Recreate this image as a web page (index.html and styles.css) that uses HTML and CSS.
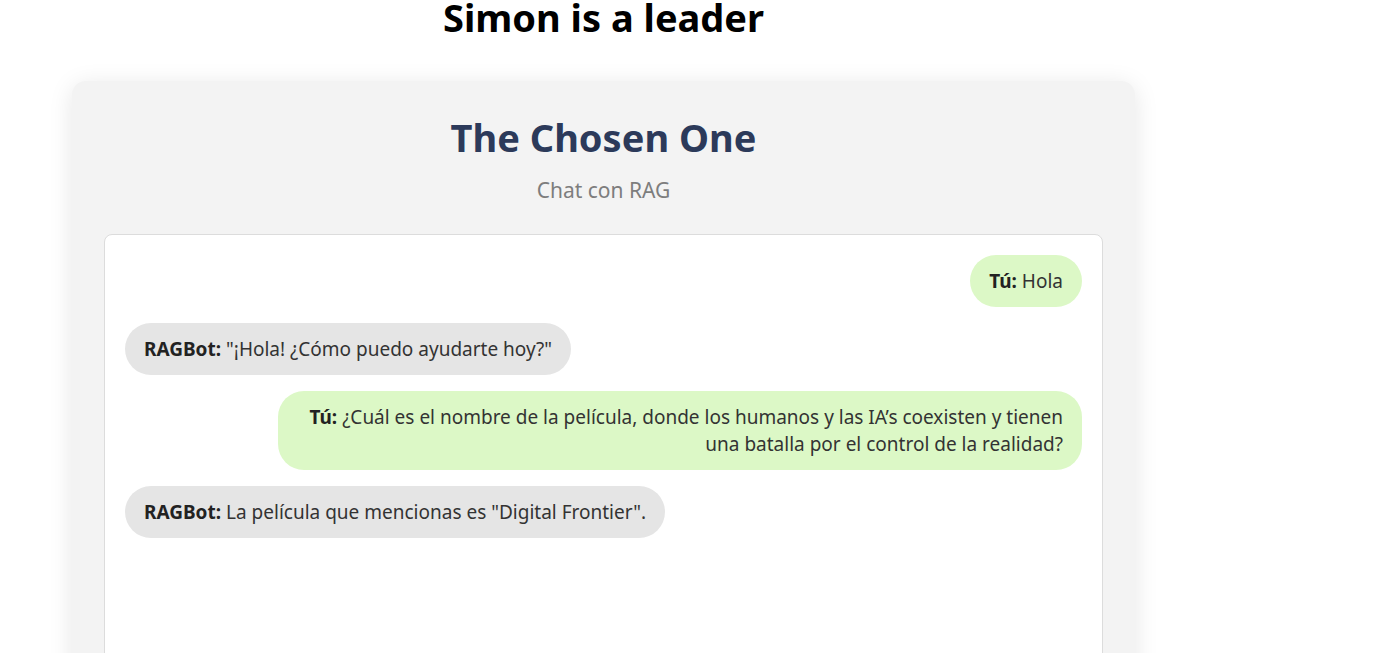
FILE: index.html
```html
<!DOCTYPE html>
<html lang="es">
<head>
<meta charset="utf-8">
<title>Simon is a leader</title>
<link rel="stylesheet" href="styles.css">
</head>
<body>
<main class="page">
  <h1 class="page-title">Simon is a leader</h1>
  <section class="card">
    <h2 class="card-title">The Chosen One</h2>
    <p class="card-subtitle">Chat con RAG</p>
    <div class="chat">
      <div class="msg msg-user"><strong>Tú:</strong> Hola</div>
      <div class="msg msg-bot"><strong>RAGBot:</strong> "¡Hola! ¿Cómo puedo ayudarte hoy?"</div>
      <div class="msg msg-user"><strong>Tú:</strong> ¿Cuál es el nombre de la película, donde los humanos y las IA’s coexisten y tienen una batalla por el control de la realidad?</div>
      <div class="msg msg-bot"><strong>RAGBot:</strong> La película que mencionas es "Digital Frontier".</div>
    </div>
  </section>
</main>
</body>
</html>
```

FILE: styles.css
```css
* { box-sizing: border-box; }
html, body { margin: 0; padding: 0; background: #fff; }
body {
  font-family: "Noto Sans", "Open Sans", sans-serif;
  color: #333;
  overflow: hidden;
}
.page {
  width: 1063px;
  margin-left: 72px;
}
.page-title {
  margin: -6px 0 0;
  text-align: center;
  font-size: 38px;
  line-height: 46px;
  font-weight: 700;
  color: #000;
}
.card {
  margin-top: 41px;
  background: #f3f3f3;
  border-radius: 14px;
  box-shadow: 0 4px 24px rgba(0, 0, 0, 0.1);
  padding: 30px 32px 40px;
}
.card-title {
  margin: 0;
  text-align: center;
  font-size: 38px;
  line-height: 52px;
  font-weight: 700;
  color: #2c3a5a;
}
.card-subtitle {
  margin: 12px 0 0;
  text-align: center;
  font-size: 21px;
  line-height: 30px;
  color: #7d7d7d;
}
.chat {
  margin-top: 29px;
  background: #fff;
  border: 1px solid #dcdcdc;
  border-radius: 8px;
  padding: 20px;
  height: 480px;
  display: flex;
  flex-direction: column;
  align-items: flex-start;
  gap: 16px;
}
.msg {
  box-sizing: content-box;
  max-width: 80%;
  padding: 13px 19px 12px;
  border-radius: 26px;
  font-size: 19px;
  line-height: 27px;
  color: #333;
}
.msg strong { font-weight: 700; color: #222; }
.msg-user {
  align-self: flex-end;
  background: #dcf8c6;
  text-align: right;
}
.msg-bot {
  background: #e5e5e5;
}
```
